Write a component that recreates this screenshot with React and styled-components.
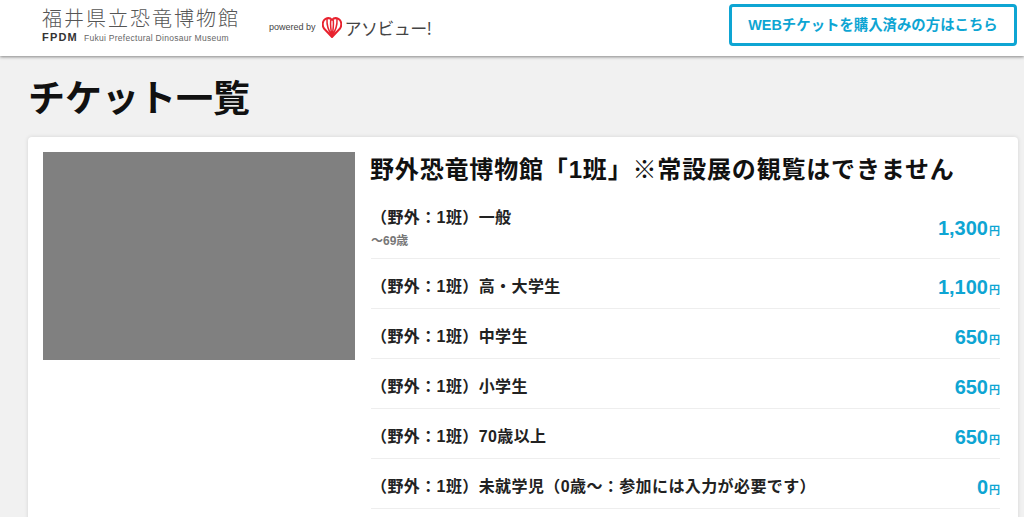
import React from "react";
import styled, { createGlobalStyle } from "styled-components";

const FONT = `"Liberation Sans", "Noto Sans CJK JP", sans-serif`;
const Global = createGlobalStyle`
  html, body { margin: 0; padding: 0; background: #f1f1f1; overflow: hidden; height: 517px; }
  body { font-family: ${FONT}; color: #111; }
  * { box-sizing: border-box; }
`;
const Header = styled.header`
  height: 56px; background: #fff; box-shadow: 0 1px 3px rgba(0,0,0,.45);
  display: flex; align-items: flex-start; justify-content: space-between;
  padding: 4px 7px 0 42px; position: relative;
`;
const Brand = styled.div`display: flex; align-items: center; gap: 31px; height: 42px;`;
const Logo = styled.div`display: flex; flex-direction: column; width: 196px;`;
const LogoJa = styled.div`
  font-family: "Noto Sans CJK JP", sans-serif; font-weight: 300; font-size: 20px; line-height: 24px;
  letter-spacing: 2px; color: #555; white-space: nowrap;
`;
const LogoEn = styled.div`display: flex; align-items: baseline; font-size: 8.5px; line-height: 12px; letter-spacing: .28px; color: #666; white-space: nowrap; margin-top: 1px;`;
const LogoMark = styled.b`font-size: 11px; color: #333; letter-spacing: 1.2px; margin-right: 6px;`;
const Powered = styled.div`display: flex; align-items: center; margin-top: 4px;`;
const PoweredBy = styled.span`font-size: 9px; color: #444; margin-right: 6px;`;
const AsoText = styled.span`font-family: "Noto Sans CJK JP", sans-serif; font-weight: 400; font-size: 17px; color: #444; margin-left: 3px; letter-spacing: -.6px;`;
const CtaButton = styled.button`
  width: 288px; height: 42px; background: #fff; border: 3px solid #0ea5d3; border-radius: 4px;
  color: #0ea5d3; font: bold 14.4px ${FONT}; padding: 0 0 3px;
`;
const Main = styled.main`padding: 0 6px 0 28px;`;
const Title = styled.h1`margin: 0; height: 81px; font-size: 37px; line-height: 88px; font-weight: 700; color: #111;`;
const Card = styled.section`
  background: #fff; border-radius: 4px; box-shadow: 0 0 4px rgba(0,0,0,.12);
  padding: 15px 18px 0 15px; display: flex; gap: 16px; height: 400px;
`;
const Photo = styled.div`width: 312px; height: 208px; background: #808080; flex: none;`;
const Body = styled.div`flex: 1; min-width: 0;`;
const CardTitle = styled.h2`margin: 0 0 14px -1px; font-size: 24px; line-height: 36px; font-weight: 700; letter-spacing: .83px; white-space: nowrap;`;
const Row = styled.div`
  display: flex; justify-content: space-between; align-items: center;
  height: ${p => p.$tall ? "57px" : "50.1px"}; border-bottom: 1px solid #eee;
  padding: ${p => p.$tall ? "0 0 3px" : "6px 0 0"};
`;
const Name = styled.div`font-size: 16px; line-height: 20px; font-weight: 700; letter-spacing: .4px; color: #222; white-space: nowrap;`;
const Note = styled.div`font-size: 12px; line-height: 16px; font-weight: 700; color: #777; margin-top: 5px;`;
const Price = styled.div`font-size: 20px; font-weight: 700; color: #0ea5d3; white-space: nowrap; margin-top: ${p => p.$tall ? "0" : "2px"};`;
const Yen = styled.span`font-size: 11px; margin-left: 1px;`;

const HeartLogo = () => (
  <svg width="20" height="21" viewBox="0 0 20 21" fill="none" stroke="#e8222e" strokeLinejoin="round" strokeLinecap="round">
    <path strokeWidth="2" d="M10 20 2 11.500C-.2 8 .6 3.400 3.500 1.800 6 .7 8.600 1.200 10 3 11.400 1.200 14 .7 16.500 1.800 19.400 3.400 20.200 8 18 11.500Z" />
    <path strokeWidth="1.500" d="M10 19C7 14.500 4.500 9.500 5 2.500M10 19C9 14 8.200 9.500 8.700 3.500M10 19C13 14.500 15.500 9.500 15 2.500M10 19C11 14 11.800 9.500 11.300 3.500" />
  </svg>
);

const tickets = [
  { name: "（野外：1班）一般", note: "～69歳", price: "1,300" },
  { name: "（野外：1班）高・大学生", price: "1,100" },
  { name: "（野外：1班）中学生", price: "650" },
  { name: "（野外：1班）小学生", price: "650" },
  { name: "（野外：1班）70歳以上", price: "650" },
  { name: "（野外：1班）未就学児（0歳～：参加には入力が必要です）", price: "0" },
];

export default function App() {
  return (
    <>
      <Global />
      <Header>
        <Brand>
          <Logo>
            <LogoJa>福井県立恐竜博物館</LogoJa>
            <LogoEn><LogoMark>FPDM</LogoMark>Fukui Prefectural Dinosaur Museum</LogoEn>
          </Logo>
          <Powered>
            <PoweredBy>powered by</PoweredBy>
            <HeartLogo />
            <AsoText>アソビュー!</AsoText>
          </Powered>
        </Brand>
        <CtaButton>WEBチケットを購入済みの方はこちら</CtaButton>
      </Header>
      <Main>
        <Title>チケット一覧</Title>
        <Card>
          <Photo />
          <Body>
            <CardTitle>野外恐竜博物館「1班」※常設展の観覧はできません</CardTitle>
            {tickets.map(t => (
              <Row key={t.name} $tall={!!t.note}>
                <div>
                  <Name>{t.name}</Name>
                  {t.note && <Note>{t.note}</Note>}
                </div>
                <Price $tall={!!t.note}>{t.price}<Yen>円</Yen></Price>
              </Row>
            ))}
          </Body>
        </Card>
      </Main>
    </>
  );
}
